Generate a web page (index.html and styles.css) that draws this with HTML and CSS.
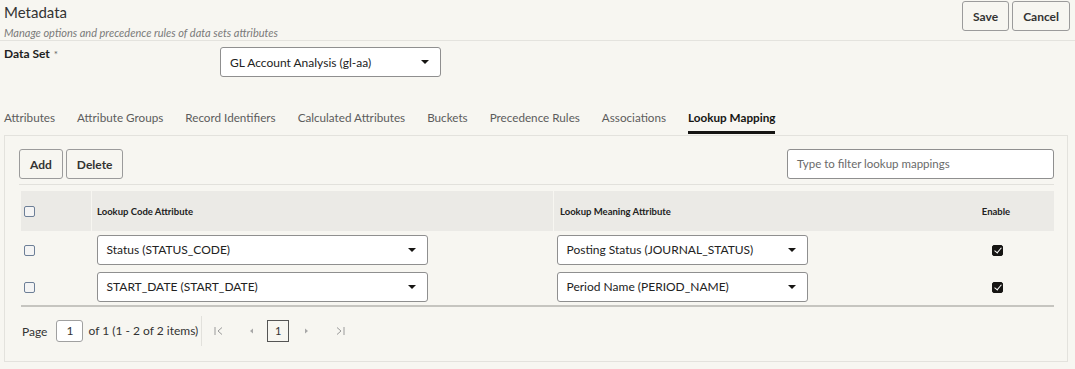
FILE: index.html
```html
<!DOCTYPE html>
<html lang="en">
  <head>
    <meta charset="UTF-8" />
    <meta name="viewport" content="width=device-width, initial-scale=1.0" />
    <title>Metadata</title>
    <link rel="stylesheet" href="styles.css">
  </head>
  <body>
    <div class="page-header">
      <div>
        <h1 class="title">Metadata</h1>
        <p class="subtitle">Manage options and precedence rules of data sets attributes</p>
      </div>
      <div class="header-actions">
        <button class="btn">Save</button>
        <button class="btn">Cancel</button>
      </div>
    </div>

    <div class="dataset-row">
      <label class="field-label">Data Set <span class="req">*</span></label>
      <div class="select select-dataset">
        <span>GL Account Analysis (gl-aa)</span>
        <span class="caret"></span>
      </div>
    </div>

    <div class="tabs">
      <span class="tab">Attributes</span>
      <span class="tab">Attribute Groups</span>
      <span class="tab">Record Identifiers</span>
      <span class="tab">Calculated Attributes</span>
      <span class="tab">Buckets</span>
      <span class="tab">Precedence Rules</span>
      <span class="tab">Associations</span>
      <span class="tab active">Lookup Mapping</span>
    </div>

    <div class="panel">
      <div class="toolbar">
        <div class="toolbar-left">
          <button class="btn">Add</button>
          <button class="btn">Delete</button>
        </div>
        <div class="filter">Type to filter lookup mappings</div>
      </div>

      <table class="grid">
        <thead>
          <tr>
            <th class="col-check"><span class="checkbox"></span></th>
            <th class="col-code">Lookup Code Attribute</th>
            <th class="col-meaning">Lookup Meaning Attribute</th>
            <th class="col-enable">Enable</th>
          </tr>
        </thead>
        <tbody>
          <tr>
            <td class="col-check"><span class="checkbox"></span></td>
            <td class="col-code">
              <div class="select select-code"><span>Status (STATUS_CODE)</span><span class="caret"></span></div>
            </td>
            <td class="col-meaning">
              <div class="select select-meaning"><span>Posting Status (JOURNAL_STATUS)</span><span class="caret"></span></div>
            </td>
            <td class="col-enable"><span class="checkbox checked"></span></td>
          </tr>
          <tr>
            <td class="col-check"><span class="checkbox"></span></td>
            <td class="col-code">
              <div class="select select-code"><span>START_DATE (START_DATE)</span><span class="caret"></span></div>
            </td>
            <td class="col-meaning">
              <div class="select select-meaning"><span>Period Name (PERIOD_NAME)</span><span class="caret"></span></div>
            </td>
            <td class="col-enable"><span class="checkbox checked"></span></td>
          </tr>
        </tbody>
      </table>

      <div class="pager">
        <span>Page</span>
        <span class="page-input">1</span>
        <span class="page-info">of 1 (1 - 2 of 2 items)</span>
        <div class="pager-nav">
          <svg width="9" height="10" viewBox="0 0 9 10"><path d="M1 1v8M8 1.5L4 5l4 3.5" fill="none" stroke="#9a9a9a" stroke-width="1"/></svg>
          <svg width="5" height="8" viewBox="0 0 5 8"><path d="M4 1.5v5L1 4z" fill="#a8a8a8"/></svg>
          <span class="page-current">1</span>
          <svg width="5" height="8" viewBox="0 0 5 8"><path d="M1 1.5v5L4 4z" fill="#a8a8a8"/></svg>
          <svg width="9" height="10" viewBox="0 0 9 10"><path d="M1 1.5L5 5l-4 3.5M8 1v8" fill="none" stroke="#9a9a9a" stroke-width="1"/></svg>
        </div>
      </div>
    </div>
  </body>
</html>
```

FILE: styles.css
```css
body {
    margin: 0;
    font-family: Lato, "Open Sans", Arial, sans-serif;
    font-size: 12px;
    color: #333;
    background-color: #f7f6f1;
    width: 1075px;
    height: 369px;
    overflow: hidden;
}

button {
    font-family: inherit;
}

.page-header {
    display: flex;
    justify-content: space-between;
    align-items: flex-start;
    padding: 1px 5px 0 4px;
    border-bottom: 1px solid #e4e3de;
    height: 39px;
}

.title {
    margin: 0;
    font-size: 15px;
    font-weight: normal;
    line-height: 22px;
    color: #333;
}

.subtitle {
    margin: 3px 0 0;
    font-size: 11px;
    font-style: italic;
    color: #7a7a7a;
}

.header-actions {
    display: flex;
    gap: 3px;
}

.btn {
    height: 30px;
    padding: 0 10px;
    background: #f7f6f1;
    border: 1px solid #9b9b9b;
    border-radius: 3px;
    font-size: 12px;
    font-weight: 700;
    color: #333;
}

.dataset-row {
    display: flex;
    padding: 5px 0 0 4px;
    height: 58px;
}

.field-label {
    width: 216px;
    font-size: 12px;
    font-weight: 700;
    color: #222;
    line-height: 16px;
}

.req {
    font-size: 10px;
    vertical-align: top;
    color: #666;
    font-weight: normal;
    margin-left: 1px;
}

.select {
    display: flex;
    justify-content: space-between;
    align-items: center;
    box-sizing: border-box;
    height: 30px;
    padding: 0 11px 0 9px;
    background: #fff;
    border: 1px solid #8f8f8f;
    border-radius: 3px;
    font-size: 12px;
    color: #222;
}

.select-dataset {
    width: 221px;
    margin-top: 1px;
}

.caret {
    width: 0;
    height: 0;
    border-left: 4px solid transparent;
    border-right: 4px solid transparent;
    border-top: 4px solid #161513;
}

.tabs {
    display: flex;
    gap: 22px;
    padding-left: 4px;
    height: 31px;
}

.tab {
    font-size: 11.7px;
    color: #5c5c5c;
    line-height: 24px;
    padding-top: 1px;
    height: 30px;
    box-sizing: border-box;
}

.tab.active {
    color: #161513;
    font-weight: 700;
    border-bottom: 3px solid #161513;
}

.panel {
    margin: 0 7px 0 4px;
    height: 227px;
    box-sizing: border-box;
    border: 1px solid #e3e2dd;
    padding: 13px 13px 0 14px;
}

.toolbar {
    display: flex;
    justify-content: space-between;
    padding-bottom: 5px;
    border-bottom: 1px solid #e2e1dc;
}

.toolbar-left {
    display: flex;
    gap: 3px;
}

.filter {
    box-sizing: border-box;
    width: 267px;
    height: 30px;
    padding: 0 9px;
    background: #fff;
    border: 1px solid #8f8f8f;
    border-radius: 3px;
    font-size: 11.5px;
    color: #6a6a6a;
    line-height: 28px;
}

.grid {
    width: calc(100% - 2px);
    margin: 6px 0 0 2px;
    border-collapse: collapse;
    border-bottom: 2px solid #c6c5c0;
}

.grid th {
    height: 40px;
    background: #ebeae6;
    font-size: 9.5px;
    font-weight: 700;
    color: #222;
    text-align: left;
    padding: 0 0 0 5px;
    border-left: 1px solid #f7f6f1;
}

.grid th:first-child,
.grid th.col-enable {
    border-left: none;
}

.grid td {
    height: 37px;
    padding: 0 0 0 5px;
}

.grid .col-check {
    width: 67px;
    padding-left: 3px;
}

.grid .col-code {
    width: 456px;
}

.grid td.col-meaning {
    padding-left: 3px;
}

.grid th.col-meaning {
    padding-left: 6px;
}

.grid .col-enable {
    width: 114px;
    text-align: center;
    padding: 0;
}

.grid td.col-enable {
    padding-left: 2px;
}

.select-code {
    width: 331px;
}

.select-meaning {
    width: 251px;
}

.checkbox {
    display: inline-block;
    width: 11px;
    height: 11px;
    box-sizing: border-box;
    border: 1px solid #6d7f97;
    border-radius: 2px;
    background: #f4f4f4;
    vertical-align: middle;
    position: relative;
}

.checkbox.checked {
    background: #161513;
    border-color: #161513;
}

.checkbox.checked::after {
    content: "";
    position: absolute;
    left: 3px;
    top: 0px;
    width: 3px;
    height: 6px;
    border: solid #fff;
    border-width: 0 1.5px 1.5px 0;
    transform: rotate(40deg);
}

.pager {
    display: flex;
    align-items: center;
    height: 48px;
    padding-left: 3px;
    font-size: 12px;
    color: #333;
}

.page-input {
    box-sizing: border-box;
    width: 27px;
    height: 22px;
    margin: 0 5px 0 9px;
    background: #fff;
    border: 1px solid #a0a0a0;
    border-radius: 3px;
    text-align: center;
    line-height: 20px;
}

.page-info {
    padding-right: 3px;
    border-right: 1px solid #e2e1dc;
    line-height: 30px;
}

.pager-nav {
    display: flex;
    align-items: center;
    padding-left: 12px;
}

.pager-nav svg {
    margin-right: 27px;
}

.pager-nav svg:first-child {
    margin-right: 26px;
}

.pager-nav svg:nth-child(2) {
    margin-right: 13px;
}

.page-current {
    box-sizing: border-box;
    width: 22px;
    height: 22px;
    margin-right: 15px;
    border: 1px solid #555;
    text-align: center;
    line-height: 20px;
    font-size: 11px;
}
```
